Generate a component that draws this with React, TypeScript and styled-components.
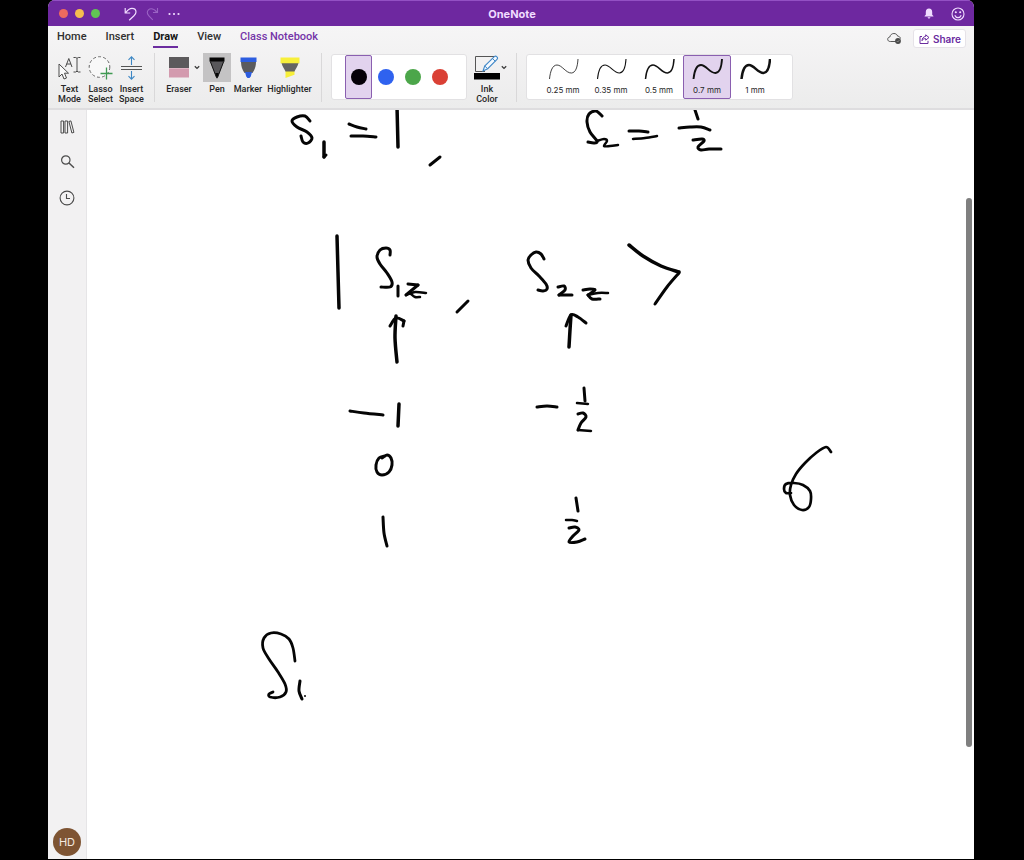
import React from "react";
import styled, { createGlobalStyle } from "styled-components";

const PURPLE = "#6b2c9f";
const FONT = 'Inter, "Liberation Sans", sans-serif';
const LABEL_FONT = 'Roboto, "Liberation Sans", sans-serif';

const GlobalStyle = createGlobalStyle`
  * { box-sizing: border-box; }
  body { margin: 0; background: #000; font-family: ${FONT}; color: #262626; }
  button { font: inherit; color: inherit; border: 0; padding: 0; background: none; cursor: pointer; }
  svg { display: block; flex: none; }
`;

const Desktop = styled.div`
  min-height: 100vh;
  display: flex;
  padding: 0 50px 1px 48px;
  background: #000;
`;

const Window = styled.div`
  flex: 1;
  min-width: 0;
  display: flex;
  flex-direction: column;
  overflow: hidden;
  border-radius: 7px 7px 0 0;
  background: #fff;
`;

const TitleBar = styled.header`
  height: 26px;
  display: grid;
  grid-template-columns: 1fr auto 1fr;
  align-items: center;
  padding: 0 9px 0 11px;
  background: #6e28a0;
  border-top: 1px solid #9350c4;
  color: #f0dcff;
`;

const TitleSide = styled.div<{ $end?: boolean; $gap: number }>`
  display: flex;
  align-items: center;
  gap: ${(p) => p.$gap}px;
  justify-content: ${(p) => (p.$end ? "flex-end" : "flex-start")};
`;

const Title = styled.h1`
  margin: 0;
  font-size: 11px;
  line-height: 14px;
  font-weight: 700;
`;

const Light = styled.button<{ $color: string }>`
  width: 9px;
  height: 9px;
  border-radius: 50%;
  background: ${(p) => p.$color};
`;

const QuickActions = styled.div`
  display: flex;
  align-items: center;
  gap: 9px;
  margin-left: 17px;
`;

const Ribbon = styled.div`
  border-bottom: 2px solid #dedddf;
  background: linear-gradient(#f6f5f6, #ececec);
`;

const TabRow = styled.div`
  display: flex;
  align-items: center;
  justify-content: space-between;
  height: 25px;
  padding: 0 8px 0 9px;
`;

const Tabs = styled.nav`
  display: flex;
  gap: 19px;
`;

const Tab = styled.a<{ $active?: boolean; $accent?: boolean }>`
  padding-bottom: 1px;
  border-bottom: 2px solid ${(p) => (p.$active ? PURPLE : "transparent")};
  color: ${(p) => (p.$accent ? "#7434a8" : p.$active ? "#161616" : "#303030")};
  font-family: ${LABEL_FONT};
  font-size: 11px;
  line-height: 16px;
  font-weight: ${(p) => (p.$active ? 700 : 500)};
  text-decoration: none;
`;

const ShareArea = styled.div`
  display: flex;
  align-items: center;
  gap: 11px;
`;

const ShareButton = styled.button`
  display: flex;
  align-items: center;
  gap: 3px;
  height: 19px;
  padding: 0 4px 0 5px;
  border: 1px solid #e6e3e8;
  border-radius: 3px;
  background: #fff;
  color: ${PURPLE};
  font-size: 10px;
  font-weight: 600;
`;

const Tools = styled.div`
  display: flex;
  align-items: flex-start;
  height: 57px;
  padding: 2px 6px 0;
`;

const Tool = styled.button<{ $width: number }>`
  width: ${(p) => p.$width}px;
  display: flex;
  flex-direction: column;
  align-items: center;
  gap: 2px;
  font-family: ${LABEL_FONT};
  font-size: 9px;
  line-height: 10px;
  font-weight: 500;
  white-space: nowrap;
`;

const ToolIcon = styled.span<{ $active?: boolean }>`
  width: 28px;
  height: 29px;
  display: flex;
  align-items: center;
  justify-content: center;
  background: ${(p) => (p.$active ? "#c4c3c4" : "transparent")};
`;

const ToolGroup = styled.div<{ $gap?: number }>`
  display: flex;
  gap: ${(p) => p.$gap ?? 0}px;
`;

const InkColorGroup = styled(ToolGroup)`
  padding: 0 2px 0 6px;
`;

const Divider = styled.span`
  width: 1px;
  height: 49px;
  margin: 0 9px 0 7px;
  background: #d9d8d9;
`;

const ChevronButton = styled.button`
  height: 29px;
  display: flex;
  align-items: center;
`;

const Gallery = styled.div`
  display: flex;
  height: 46px;
  margin-top: 1px;
  border: 1px solid #e2e1e3;
  border-radius: 3px;
  background: #fff;
`;

const ColorGallery = styled(Gallery)`
  padding: 0 13px;
`;

const WidthGallery = styled(Gallery)`
  padding: 0 13px 0 12px;
`;

const Choice = styled.button<{ $active?: boolean; $width: number }>`
  width: ${(p) => p.$width}px;
  height: 44px;
  display: flex;
  flex-direction: column;
  align-items: center;
  justify-content: center;
  gap: 4px;
  border: 1px solid ${(p) => (p.$active ? "#8a5fb0" : "transparent")};
  border-radius: 2px;
  background: ${(p) => (p.$active ? "#e2d3ee" : "transparent")};
`;

const WidthChoice = styled(Choice)`
  padding-bottom: 2px;
  font-size: 8px;
  line-height: 10px;
  white-space: nowrap;
`;

const Dot = styled.span<{ $color: string }>`
  width: 16px;
  height: 16px;
  border-radius: 50%;
  background: ${(p) => p.$color};
`;

const Workspace = styled.div`
  flex: 1;
  display: flex;
  min-height: 0;
`;

const Sidebar = styled.aside`
  width: 39px;
  display: flex;
  flex-direction: column;
  align-items: center;
  gap: 20px;
  padding: 10px 0 3px;
  border-right: 1px solid #e6e5e7;
  background: #f2f1f2;
  color: #4b4b4b;
`;

const Avatar = styled.button`
  width: 28px;
  height: 28px;
  margin-top: auto;
  border-radius: 50%;
  background: #7e5433;
  color: #f4e9e0;
  font-size: 11px;
`;

const Canvas = styled.main`
  flex: 1;
  min-width: 0;
  display: flex;
  background: #fff;
`;

const InkLayer = styled.svg`
  flex: 1;
  min-width: 0;
  fill: none;
  stroke: #050505;
  stroke-linecap: round;
  stroke-linejoin: round;
`;

const ScrollTrack = styled.div`
  width: 9px;
  padding: 88px 2px 112px 1px;
  display: flex;
`;

const ScrollThumb = styled.div`
  flex: 1;
  border-radius: 3px;
  background: #7f7f7f;
`;

const Chevron = () => (
  <svg width="6" height="5" viewBox="0 0 6 5" fill="none" stroke="#3a3a3a" strokeWidth="1.3">
    <path d="M.8 1.2 3 3.4 5.2 1.2" />
  </svg>
);

const UndoIcon = () => (
  <svg width="13" height="14" viewBox="0 0 13 14" fill="none" stroke="currentColor" strokeWidth="1.2">
    <path d="M1.2 1v5h5M1.4 5.8C3.5 3 5.4 1.3 8 1.3c2.5 0 4 1.7 4 3.8 0 1.5-.8 2.6-2 3.7L5.2 13.3" />
  </svg>
);

const RedoIcon = () => (
  <svg width="13" height="14" viewBox="0 0 13 14" fill="none" stroke="#9a63c4" strokeWidth="1.1">
    <path d="M11.5 1v4.500H7M11 5.300C9 2.800 7.300 1.800 5.300 1.800 2.900 1.800 1.300 3.400 1.300 5.600c0 1.400.7 2.400 1.800 3.500l3.700 3.700" />
  </svg>
);

const MoreIcon = () => (
  <svg width="12" height="4" viewBox="0 0 12 4" fill="currentColor">
    <circle cx="1.5" cy="2" r="1.1" /><circle cx="6" cy="2" r="1.1" /><circle cx="10.5" cy="2" r="1.1" />
  </svg>
);

const BellIcon = () => (
  <svg width="10" height="11" viewBox="0 0 10 11" fill="currentColor">
    <path d="M5 .5C2.900.5 1.800 2 1.800 4v2.700L.6 8v.6h8.800V8L8.200 6.700V4C8.200 2 7.100.5 5 .5ZM3.600 9.200a1.400 1.300 0 0 0 2.800 0Z" />
  </svg>
);

const SmileIcon = () => (
  <svg width="14" height="14" viewBox="0 0 14 14" fill="none" stroke="currentColor" strokeWidth="1.1">
    <circle cx="7" cy="7" r="6" />
    <path d="M3.8 8.200c.6 1.600 1.800 2.400 3.200 2.400s2.600-.8 3.200-2.400" />
    <circle cx="4.800" cy="5.200" r=".5" fill="currentColor" /><circle cx="9.200" cy="5.200" r=".5" fill="currentColor" />
  </svg>
);

const CloudIcon = () => (
  <svg width="15" height="13" viewBox="0 0 15 13" fill="none" stroke="#555" strokeWidth="1">
    <path d="M9 9.500H3.300C1.700 9.500.7 8.600.7 7.200c0-1.200.9-2.100 2.200-2.300C3.300 2.800 4.900 1.500 6.900 1.500c1.900 0 3.200 1 3.800 2.700 1.600.1 2.700 1 2.700 2.400" />
    <circle cx="11" cy="9" r="2.900" fill="#4a4a4a" stroke="none" />
    <path d="m9.800 9.100.9.900 1.600-1.800" stroke="#aaa" strokeWidth=".7" />
  </svg>
);

const ShareIcon = () => (
  <svg width="11" height="10" viewBox="0 0 11 10" fill="none" stroke="currentColor" strokeWidth="1">
    <path d="M3 2.500H1v7h8V6.800M6.700.8l3.300 2.700-3.300 2.700V4.600C4.900 4.500 3.700 5.200 3 6.700c.1-2.400 1.400-4 3.700-4.300Z" />
  </svg>
);

const TextModeIcon = () => (
  <svg width="25" height="26" viewBox="0 0 25 26" fill="none" stroke="#4a4a4a" strokeWidth="1">
    <path d="M2 9v13l3-3 2 5 2.500-1-2-4.800h4Z" fill="#fafafa" />
    <path d="m8.500 12 3.300-8.500L15 12M9.600 9h4.300" />
    <path d="M16.500 2.500h2.200l1.300.8 1.300-.8h2.200M20 3.300v12.900M16.500 17h2.200l1.300-.8 1.300.8h2.200" />
  </svg>
);

const LassoIcon = () => (
  <svg width="25" height="26" viewBox="0 0 25 26" fill="none">
    <circle cx="11.500" cy="12" r="10.300" fill="#f8f8f8" stroke="#666" strokeWidth="1" strokeDasharray="3 2.200" />
    <path d="M12.500 18.500h12M18.500 12.500v12" stroke="#3e9a52" strokeWidth="1.300" />
  </svg>
);

const InsertSpaceIcon = () => (
  <svg width="23" height="26" viewBox="0 0 23 26" fill="none">
    <path d="M1 11.500h21M1 14.500h21" stroke="#555" strokeWidth="1.100" />
    <path d="M11.500 10V2M8.500 4.800l3-3 3 3M11.500 16v8M8.500 21.200l3 3 3-3" stroke="#3d87c4" strokeWidth="1.100" />
  </svg>
);

const EraserIcon = () => (
  <svg width="20" height="23" viewBox="0 0 20 23">
    <path d="M0 1h20v12H0Z" fill="#5c5a5c" />
    <path d="M0 13h20v8.500H0Z" fill="#d39aae" />
    <path d="M0 12.500h20" stroke="#dfb6c4" />
  </svg>
);

const PenIcon = () => (
  <svg width="16" height="24" viewBox="0 0 16 24">
    <path d="M1 5h14L8.500 22h-1Z" fill="#58575a" />
    <path d="M.5 1.500h15v4H.5ZM6.200 17h3.600l-1.600 5.500h-.4Z" fill="#050505" />
    <path d="M1.300 5.500 7.500 21.500M14.700 5.500 8.500 21.500" stroke="#111" strokeWidth="1" />
  </svg>
);

const MarkerIcon = () => (
  <svg width="17" height="24" viewBox="0 0 17 24">
    <path d="M1 6h15c0 4-1.300 8-3.500 11h-8C2.300 14 1 10 1 6Z" fill="#5b5b5e" />
    <path d="M.5 1.500h16V6H.5ZM5 16h7l-1.200 4.500L9.500 22h-2l-1.300-1.500Z" fill="#2c5de0" />
  </svg>
);

const HighlighterIcon = () => (
  <svg width="20" height="24" viewBox="0 0 20 24">
    <path d="M1.500 7h17c-1 3.500-2.500 5.500-4.300 9H5.800C4 12.500 2.500 10.500 1.500 7Z" fill="#646462" />
    <path d="M.5 1.500h19v5.700H.5ZM5.500 15.500h9v3.300L5.500 22Z" fill="#f7ef3a" />
  </svg>
);

const InkColorIcon = () => (
  <svg width="26" height="25" viewBox="0 0 26 25" fill="none">
    <path d="M11 16.500H1.500v-15H20" stroke="#555" strokeWidth="1" fill="none" />
    <path d="m9 16 1.700-5L20.300 1.700c.8-.8 1.800-.7 2.600.1s.8 1.800.1 2.500L13.700 13.700Z" fill="#f5faff" stroke="#4088c8" strokeWidth="1.100" />
    <path d="m10.700 11 3 2.700M18.500 3.500l2.800 2.800" stroke="#4088c8" />
    <path d="M0 18h26v6.500H0Z" fill="#000" />
  </svg>
);

const LibraryIcon = () => (
  <svg width="15" height="14" viewBox="0 0 15 14" fill="none" stroke="currentColor" strokeWidth="1">
    <path d="M1 1h2.600v12H1ZM5 1h2.600v12H5ZM8.900 1.500l2-.6 3 11.500-2 .6Z" />
  </svg>
);

const SearchIcon = () => (
  <svg width="15" height="16" viewBox="0 0 15 16" fill="none" stroke="currentColor">
    <circle cx="5.800" cy="6" r="4.200" strokeWidth="1.200" />
    <path d="m9 9 5 4.700" strokeWidth="1.500" />
  </svg>
);

const ClockIcon = () => (
  <svg width="16" height="16" viewBox="0 0 16 16" fill="none" stroke="currentColor" strokeWidth="1.100">
    <circle cx="8" cy="8" r="6.900" />
    <path d="M7.500 4v4.500H11" />
  </svg>
);

type Point = [number, number];
type Stroke = { width?: number; points: Point[] };

const strokes: Stroke[] = [
  // S1 = 1,
  { points: [[310, 121], [305, 116], [297, 117], [292, 121], [297, 127], [307, 132], [312, 138], [308, 143], [303, 142], [301, 136]] },
  { width: 3.5, points: [[324, 142], [324, 157]] },
  { points: [[324, 157], [326, 155]] },
  { points: [[349, 124], [357, 127], [366, 129]] },
  { points: [[351, 136], [363, 136], [376, 137]] },
  { width: 3.5, points: [[397, 106], [398, 147]] },
  { points: [[440, 157], [430, 165]] },
  // S2 = 1/2
  { points: [[602, 116], [596, 111], [589, 114], [587, 122], [590, 132], [597, 141], [594, 143], [588, 142]] },
  { width: 2.5, points: [[597, 141], [604, 139], [607, 141], [604, 146], [610, 146], [618, 145]] },
  { points: [[629, 131], [639, 131], [648, 132]] },
  { width: 2.5, points: [[633, 139], [645, 138], [657, 136]] },
  { points: [[695, 110], [698, 119]] },
  { points: [[679, 128], [690, 127], [701, 127], [710, 130]] },
  { points: [[693, 140], [702, 139], [704, 141], [698, 147], [701, 150], [709, 149], [721, 149]] },
  // | S1z ,
  { width: 3.5, points: [[337, 236], [339, 308]] },
  { points: [[390, 255], [390, 250], [386, 248], [380, 250], [377, 257], [380, 264], [387, 273], [392, 282], [390, 287], [381, 287]] },
  { points: [[398, 286], [398, 296]] },
  { points: [[408, 284], [418, 285]] },
  { points: [[418, 285], [406, 295]] },
  { width: 2.5, points: [[406, 295], [415, 292], [426, 293]] },
  { width: 2.5, points: [[411, 294], [415, 297], [420, 297]] },
  { points: [[468, 301], [457, 312]] },
  { width: 3.5, points: [[396, 316], [395, 338], [397, 362]] },
  { points: [[390, 326], [396, 318], [404, 321]] },
  { points: [[404, 321], [403, 326]] },
  // S2z >
  { points: [[544, 259], [541, 254], [536, 252], [531, 255], [528, 260], [531, 268], [539, 276], [546, 284], [547, 289], [543, 291], [538, 290]] },
  { points: [[558, 287], [564, 286], [565, 290], [559, 295]] },
  { points: [[559, 295], [572, 295]] },
  { points: [[583, 290], [590, 289], [595, 290], [588, 295]] },
  { points: [[588, 295], [592, 299], [600, 299]] },
  { width: 2.5, points: [[588, 295], [598, 293], [608, 293]] },
  { width: 3.5, points: [[629, 245], [643, 256], [661, 266], [679, 272]] },
  { points: [[679, 273], [667, 287], [655, 304]] },
  { width: 3.5, points: [[571, 315], [570, 330], [569, 347]] },
  { points: [[566, 326], [571, 315], [578, 317], [586, 323]] },
  // left column: -1, 0, 1
  { points: [[350, 411], [364, 413], [383, 415]] },
  { width: 3.5, points: [[399, 404], [398, 426]] },
  { points: [[385, 456], [379, 458], [376, 465], [377, 472], [382, 475], [389, 472], [392, 465], [391, 458], [387, 455], [382, 458]] },
  { points: [[383, 517], [384, 533], [387, 546]] },
  // right column: -1/2, 1/2
  { points: [[537, 407], [547, 406], [557, 407]] },
  { points: [[584, 388], [585, 401]] },
  { width: 2.5, points: [[577, 403], [588, 404]] },
  { points: [[578, 414], [583, 413], [586, 417], [581, 423], [578, 430]] },
  { width: 2.5, points: [[578, 430], [591, 431]] },
  { points: [[576, 498], [578, 511]] },
  { width: 2.5, points: [[566, 520], [572, 520], [577, 521]] },
  { points: [[569, 528], [575, 527], [579, 530], [573, 536], [569, 542], [577, 542], [585, 539]] },
  // looped mark
  { width: 2.7, points: [[831, 452], [826, 447], [816, 453], [805, 463], [796, 474], [791, 485], [790, 495], [794, 505], [802, 510], [809, 507], [811, 499], [810, 491], [803, 485], [794, 483], [786, 484], [784, 489], [786, 493], [791, 493]] },
  // S1 in progress
  { width: 2.8, points: [[295, 661], [293, 648], [289, 639], [281, 634], [271, 633], [264, 638], [263, 648], [269, 659], [278, 672], [285, 684], [286, 692], [280, 697], [270, 697], [269, 694], [273, 692]] },
  { points: [[300, 681], [299, 691], [302, 699]] },
  { width: 2, points: [[305, 696], [305, 696]] },
];

// Catmull-Rom spline through the sampled pen points
function toPath(points: Point[]): string {
  let d = `M${points[0][0]} ${points[0][1]}`;
  for (let i = 0; i < points.length - 1; i++) {
    const a = points[i - 1] ?? points[i];
    const b = points[i];
    const c = points[i + 1];
    const e = points[i + 2] ?? c;
    d += `C${b[0] + (c[0] - a[0]) / 6} ${b[1] + (c[1] - a[1]) / 6} ${c[0] - (e[0] - b[0]) / 6} ${c[1] - (e[1] - b[1]) / 6} ${c[0]} ${c[1]}`;
  }
  return d;
}

const colors = [
  { name: "Black", value: "#050008" },
  { name: "Blue", value: "#2f62ef" },
  { name: "Green", value: "#4ca64a" },
  { name: "Red", value: "#da4035" },
];

const penWidths = [
  { label: "0.25 mm", size: 0.8 },
  { label: "0.35 mm", size: 1.1 },
  { label: "0.5 mm", size: 1.5 },
  { label: "0.7 mm", size: 1.9 },
  { label: "1 mm", size: 2.5 },
];

export default function App() {
  return (
    <>
      <GlobalStyle />
      <Desktop>
        <Window>
          <TitleBar>
            <TitleSide $gap={7}>
              <Light $color="#ee6a5f" aria-label="Close" />
              <Light $color="#f5bd4f" aria-label="Minimize" />
              <Light $color="#61c454" aria-label="Zoom" />
              <QuickActions>
                <button aria-label="Undo"><UndoIcon /></button>
                <button aria-label="Redo"><RedoIcon /></button>
                <button aria-label="More"><MoreIcon /></button>
              </QuickActions>
            </TitleSide>
            <Title>OneNote</Title>
            <TitleSide $end $gap={17}>
              <button aria-label="Notifications"><BellIcon /></button>
              <button aria-label="Feedback"><SmileIcon /></button>
            </TitleSide>
          </TitleBar>

          <Ribbon>
            <TabRow>
              <Tabs>
                <Tab href="#home">Home</Tab>
                <Tab href="#insert">Insert</Tab>
                <Tab href="#draw" $active>Draw</Tab>
                <Tab href="#view">View</Tab>
                <Tab href="#class" $accent>Class Notebook</Tab>
              </Tabs>
              <ShareArea>
                <CloudIcon />
                <ShareButton><ShareIcon />Share</ShareButton>
              </ShareArea>
            </TabRow>
            <Tools>
              <ToolGroup>
                <Tool $width={31}><ToolIcon><TextModeIcon /></ToolIcon><span>Text<br />Mode</span></Tool>
                <Tool $width={31}><ToolIcon><LassoIcon /></ToolIcon><span>Lasso<br />Select</span></Tool>
                <Tool $width={31}><ToolIcon><InsertSpaceIcon /></ToolIcon><span>Insert<br />Space</span></Tool>
              </ToolGroup>
              <Divider />
              <ToolGroup $gap={3}>
                <ToolGroup>
                  <Tool $width={30}><ToolIcon><EraserIcon /></ToolIcon>Eraser</Tool>
                  <ChevronButton aria-label="Eraser options"><Chevron /></ChevronButton>
                </ToolGroup>
                <Tool $width={28}><ToolIcon $active><PenIcon /></ToolIcon>Pen</Tool>
                <Tool $width={28}><ToolIcon><MarkerIcon /></ToolIcon>Marker</Tool>
                <Tool $width={49}><ToolIcon><HighlighterIcon /></ToolIcon>Highlighter</Tool>
              </ToolGroup>
              <Divider />
              <ColorGallery>
                {colors.map((c, i) => (
                  <Choice key={c.name} $width={27} $active={i === 0} aria-label={c.name} aria-pressed={i === 0}>
                    <Dot $color={c.value} />
                  </Choice>
                ))}
              </ColorGallery>
              <InkColorGroup>
                <Tool $width={28}><ToolIcon><InkColorIcon /></ToolIcon><span>Ink<br />Color</span></Tool>
                <ChevronButton aria-label="Ink color options"><Chevron /></ChevronButton>
              </InkColorGroup>
              <Divider />
              <WidthGallery>
                {penWidths.map((w) => (
                  <WidthChoice key={w.label} $width={48} $active={w.label === "0.7 mm"} aria-pressed={w.label === "0.7 mm"}>
                    <svg width="32" height="24" viewBox="0 0 32 24" fill="none" stroke="#111" strokeWidth={w.size}>
                      <path d="M2.500 22C3.300 14 5.500 8 10 8c5 0 9 8.300 14.500 8 4-.3 6-5.500 6.500-14" />
                    </svg>
                    {w.label}
                  </WidthChoice>
                ))}
              </WidthGallery>
            </Tools>
          </Ribbon>

          <Workspace>
            <Sidebar>
              <button aria-label="Notebooks"><LibraryIcon /></button>
              <button aria-label="Search"><SearchIcon /></button>
              <button aria-label="Recent"><ClockIcon /></button>
              <Avatar aria-label="Account HD">HD</Avatar>
            </Sidebar>
            <Canvas>
              <InkLayer role="img" aria-label="Handwritten spin state notes">
                <g transform="translate(-87 -110)">
                  {strokes.map((s, i) => (
                    <path key={i} d={toPath(s.points)} strokeWidth={s.width ?? 3} />
                  ))}
                </g>
              </InkLayer>
              <ScrollTrack><ScrollThumb /></ScrollTrack>
            </Canvas>
          </Workspace>
        </Window>
      </Desktop>
    </>
  );
}
